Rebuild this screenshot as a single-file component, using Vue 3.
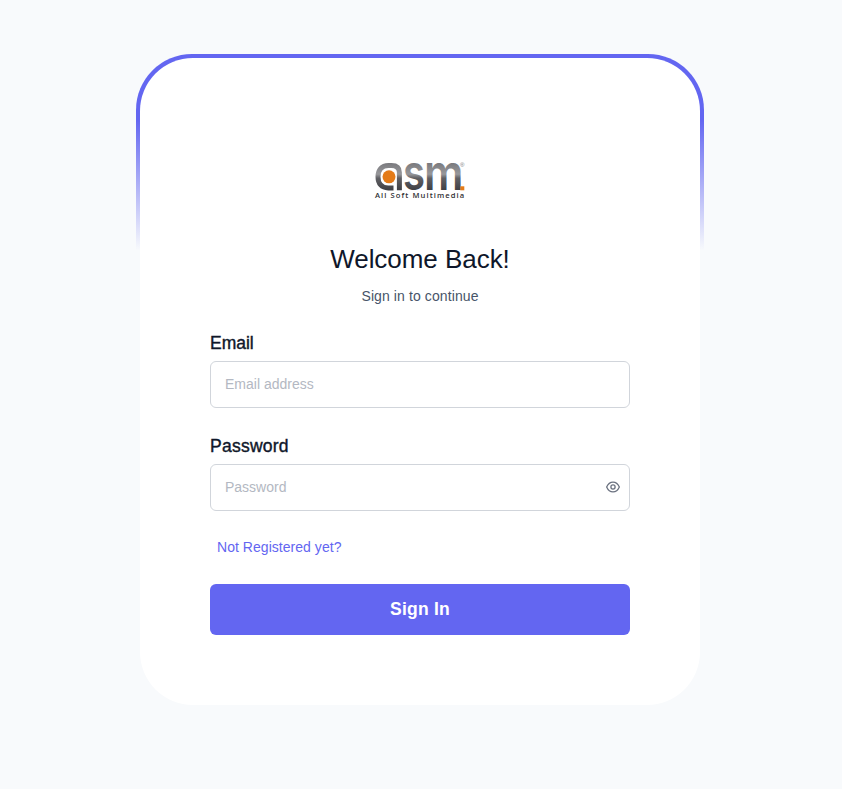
<script setup>
import { ref } from 'vue'

const email = ref('')
const password = ref('')
const showPassword = ref(false)
</script>

<template>
  <main class="page">
    <div class="frame">
      <section class="card">
        <svg class="logo" viewBox="0 0 92 40" aria-label="asm All Soft Multimedia">
          <defs>
            <linearGradient id="metal" gradientUnits="userSpaceOnUse" x1="0" y1="2" x2="0" y2="31">
              <stop offset="0" stop-color="#77777b" />
              <stop offset="0.42" stop-color="#98989b" />
              <stop offset="0.56" stop-color="#606064" />
              <stop offset="1" stop-color="#3d3d42" />
            </linearGradient>
          </defs>
          <path d="M25.4 30.3V12.5Q25.4 5.4 17.5 5.4H14.5C7.5 5.4 4 10 4 16.7C4 23.7 7.7 27.9 14.2 27.9H19.5" fill="none" stroke="url(#metal)" stroke-width="5" />
          <circle cx="15" cy="16.8" r="6.5" fill="#e47b18" />
          <text class="wordmark" x="29" y="30.2" textLength="22" lengthAdjust="spacingAndGlyphs" fill="url(#metal)">s</text>
          <text class="wordmark" x="50" y="30.2" textLength="39.5" lengthAdjust="spacingAndGlyphs" fill="url(#metal)">m</text>
          <rect x="86.3" y="26.3" width="4" height="4" fill="#e47b18" />
          <text x="86" y="7" font-size="6" fill="#77777b">®</text>
          <text class="tagline" x="1" y="37.9" textLength="89.2">All Soft Multimedia</text>
        </svg>
        <h1>Welcome Back!</h1>
        <p class="subtitle">Sign in to continue</p>
        <form @submit.prevent>
          <label for="email">Email</label>
          <div class="field"><input id="email" v-model="email" type="text" placeholder="Email address" /></div>
          <label class="password-label" for="password">Password</label>
          <div class="field">
            <input id="password" v-model="password" :type="showPassword ? 'text' : 'password'" placeholder="Password" />
            <svg class="eye" viewBox="0 0 14 14" @click="showPassword = !showPassword">
              <path d="M.65 7C2.1 3.7 4.2 2.1 7 2.1S11.9 3.7 13.35 7C11.9 10.3 9.8 11.9 7 11.9S2.1 10.3.65 7Z" />
              <circle cx="7" cy="7" r="2.1" />
            </svg>
          </div>
          <a class="register">Not Registered yet?</a>
          <button type="submit">Sign In</button>
        </form>
      </section>
    </div>
  </main>
</template>

<style>
body { background: #f8fafc; }
</style>

<style scoped>
* { box-sizing: border-box; }
.page {
  width: 842px;
  height: 789px;
  padding: 54px 138px 0 136px;
  overflow: hidden;
  background: #f8fafc;
  color: #0f172a;
  font-family: "Liberation Sans", Arial, sans-serif;
}
.frame {
  height: 655px;
  padding: 4px;
  border-radius: 56px;
  background: linear-gradient(180deg, #6366f1 10%, rgba(99, 102, 241, 0) 30%);
}
.card {
  display: flex;
  flex-direction: column;
  align-items: center;
  height: 647px;
  padding: 102px 70px 0;
  border-radius: 53px;
  background: #fff;
}
.logo { display: block; width: 92px; height: 40px; flex: none; overflow: visible; }
.wordmark { font: 600 49.5px Inter, sans-serif; }
.tagline { font: 600 7.6px "Open Sans", sans-serif; fill: #303034; }
h1 { margin: 43px 0 0; font-size: 26px; font-weight: 400; line-height: 32px; letter-spacing: -0.04px; }
.subtitle { margin: 13px 0 0; font-size: 14px; line-height: 16px; letter-spacing: 0.1px; color: #475569; }
form { display: flex; flex-direction: column; width: 420px; margin-top: 28px; }
label { height: 21px; margin-bottom: 8px; padding-top: 1px; font-size: 17.5px; font-weight: 400; line-height: 21px; -webkit-text-stroke: 0.4px #0f172a; }
.password-label { letter-spacing: 0.25px; }
.field {
  display: flex;
  align-items: center;
  height: 47px;
  margin-bottom: 27px;
  padding: 0 9px 1px 14px;
  border: 1px solid #d1d5db;
  border-radius: 6px;
}
input {
  flex: 1;
  min-width: 0;
  padding: 0;
  border: 0;
  outline: 0;
  background: transparent;
  font: 14px "Liberation Sans", Arial, sans-serif;
  color: #334155;
}
input::placeholder { color: #b3b8c2; opacity: 1; }
.eye { width: 14px; height: 14px; fill: none; stroke: #6b7280; stroke-width: 1.3; cursor: pointer; }
.register { margin: 1px 0 0 7px; font-size: 14px; line-height: 16px; letter-spacing: 0.04px; color: #6366f1; }
button {
  height: 51px;
  margin-top: 29px;
  padding: 0;
  border: 0;
  border-radius: 6px;
  background: #6366f1;
  color: #fff;
  font: 700 17.5px "Liberation Sans", Arial, sans-serif;
  letter-spacing: 0.25px;
}
</style>
